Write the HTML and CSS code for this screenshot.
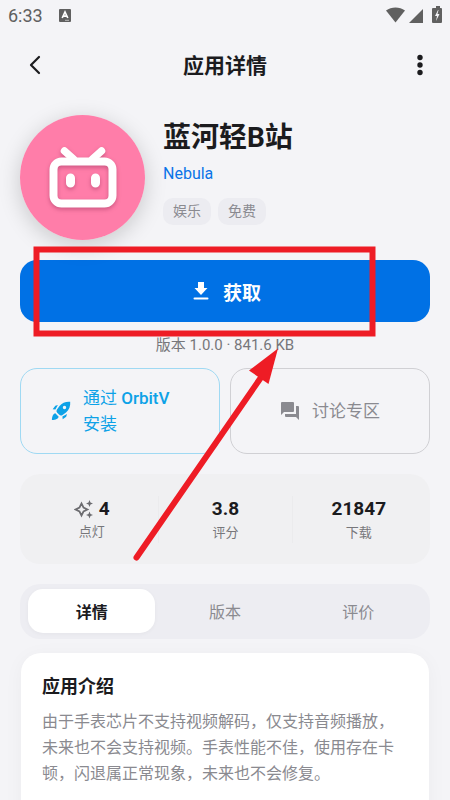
FILE: index.html
```html
<!DOCTYPE html>
<html lang="zh-CN">
<head>
<meta charset="utf-8">
<meta name="viewport" content="width=device-width, initial-scale=1">
<title>应用详情</title>
<link rel="stylesheet" href="styles.css">
</head>
<body>
<div class="screen">
  <div class="status">
    <span class="status-time">6:33</span>
    <svg class="status-app" width="12" height="14" viewBox="0 0 12 14"><rect y="1" width="12" height="13" rx="1" fill="#606060"/><path d="M3.2 10 6 4 8.800 10M4.200 8.200h3.600" fill="none" stroke="#fff" stroke-width="1.700"/><path d="M6 12.300h4" stroke="#bbb" stroke-width="1"/></svg>
    <svg class="status-icons" width="58" height="18" viewBox="0 0 58 18" fill="#606060"><path d="M2 4.500C7.500.5 15.500.5 21 4.500L11.500 16.500z"/><path d="M39 3v14H25z"/><path d="M50 2h2V0h4v2h1q1 0 1 1v13q0 1-1 1h-8q-1 0-1-1V3q0-1 1-1z"/><path d="m54 4-3 6h2l-1 5 3.500-7h-2l1-4z" fill="#f4f4f7"/></svg>
  </div>
  <header class="topbar">
    <button class="icon-button" type="button" aria-label="返回"><svg width="30" height="30" viewBox="0 0 30 30"><path d="m24 7-8 8 8 8" fill="none" stroke="#1b1b1e" stroke-width="2.200" stroke-linecap="round" stroke-linejoin="round"/></svg></button>
    <h1 class="page-title">应用详情</h1>
    <button class="icon-button" type="button" aria-label="更多"><svg width="30" height="30" viewBox="0 0 30 30" fill="#1b1b1e"><circle cx="15" cy="7.500" r="2.700"/><circle cx="15" cy="15" r="2.700"/><circle cx="15" cy="22.500" r="2.700"/></svg></button>
  </header>
  <main class="content">
    <section class="app">
      <div class="app-logo">
        <svg width="125" height="125" viewBox="0 0 125 125">
          <circle cx="62.500" cy="62.500" r="62.500" fill="#ff7da9"/>
          <g class="app-face" fill="none" stroke="#fff" stroke-linecap="round"><rect x="33.500" y="46.500" width="59" height="42" rx="8" stroke-width="8"/><path d="m44.500 36 9 8M81.500 36l-9 8" stroke-width="7.500"/><path d="M50.500 63v5M75.500 63v5" stroke-width="9"/></g>
        </svg>
      </div>
      <div class="app-info">
        <h2 class="app-name">蓝河轻B站</h2>
        <a class="app-author" href="#author">Nebula</a>
        <div class="chips"><span class="chip">娱乐</span><span class="chip">免费</span></div>
      </div>
    </section>
    <button class="get" type="button">
      <svg width="16" height="20" viewBox="0 0 16 20" fill="#fff"><path d="M5 1h6v6h3.500L8 14 1.500 7H5z"/><path d="M1.500 17.500h13" stroke="#fff" stroke-width="2" stroke-linecap="round"/></svg>
      <span>获取</span>
    </button>
    <p class="version">版本 1.0.0 · 841.6 KB</p>
    <div class="actions">
      <button class="action action-orbit" type="button">
        <svg width="20" height="20" viewBox="0 0 20 20" fill="#0da2e7"><path fill-rule="evenodd" d="M19.200.8C15 .4 11 1.800 8.500 5L5.800 8.800q-.9 1.600.4 2.900l2.100 2.100q1.300 1.300 2.900.4L15 11.500C18.200 9 19.600 5 19.200.8zM13.500 4.800a1.700 1.700 0 1 1 0 3.400 1.700 1.700 0 0 1 0-3.400z"/><path d="M6.900 4 4.300 4.800 1.700 8.300l2.700.3zM16 13.100l-.8 2.600-3.500 2.600-.3-2.700zM4.300 12.300l3.400 3.400c-.7 2-2.500 3.200-6.800 3.400.2-4.300 1.400-6.100 3.400-6.800z"/></svg>
        <span>通过 <span class="action-brand">OrbitV</span> 安装</span>
      </button>
      <button class="action action-forum" type="button">
        <svg width="20" height="20" viewBox="0 0 20 20" fill="#8a8a90"><path d="M2 1h11q1 0 1 1v8q0 1-1 1H4L1 14V2q0-1 1-1z"/><path d="M16 5h2q1 0 1 1v13l-3-3H6q-1 0-1-1v-2h11z"/></svg>
        <span>讨论专区</span>
      </button>
    </div>
    <section class="stats">
      <div class="stat stat-lamp"><strong class="stat-value"><svg width="20" height="20" viewBox="0 0 20 20"><path d="m7.500 4.500 2 4 4 2-4 2-2 4-2-4-4-2 4-2z" fill="none" stroke="#6c6c70" stroke-width="1.700"/><path d="m15.500 1 1 2.500 2.500 1-2.500 1-1 2.500-1-2.500-2.500-1 2.500-1zM15.500 12.500l1 2.500 2.500 1-2.500 1-1 2.500-1-2.500-2.500-1 2.500-1z" fill="#6c6c70"/></svg>4</strong><span class="stat-label">点灯</span></div>
      <div class="stat"><strong class="stat-value">3.8</strong><span class="stat-label">评分</span></div>
      <div class="stat"><strong class="stat-value">21847</strong><span class="stat-label">下载</span></div>
    </section>
    <nav class="tabs">
      <button class="tab tab-active" type="button">详情</button>
      <button class="tab" type="button">版本</button>
      <button class="tab" type="button">评价</button>
    </nav>
    <article class="card">
      <h3 class="card-title">应用介绍</h3>
      <p class="card-text">由于手表芯片不支持视频解码，仅支持音频播放，未来也不会支持视频。手表性能不佳，使用存在卡顿，闪退属正常现象，未来也不会修复。</p>
    </article>
  </main>
  <svg class="annotation" width="450" height="800" viewBox="0 0 450 800" aria-hidden="true"><rect x="36.500" y="249.500" width="336" height="84" fill="none" stroke="#ee1c25" stroke-width="6"/><path d="M136.500 557.500 262 376" stroke="#ee1c25" stroke-width="6" stroke-linecap="round"/><path d="M278 348.500 249 370.500 268.500 384z" fill="#ee1c25"/></svg>
</div>
</body>
</html>
```
FILE: styles.css
```css
* {
  box-sizing: border-box;
}

body {
  margin: 0;
  background: #f4f4f7;
  color: #1b1b1e;
  font-family: Roboto, "Noto Sans CJK SC", sans-serif;
}

button {
  margin: 0;
  padding: 0;
  border: 0;
  background: none;
  color: inherit;
  font: inherit;
}

h1, h2, h3, p {
  margin: 0;
}

svg {
  flex: none;
}

.screen {
  position: relative;
  height: 100vh;
  overflow: hidden;
}

.status {
  display: flex;
  align-items: center;
  height: 30px;
  padding: 0 8px;
  color: #606060;
}

.status-time {
  font-size: 18px;
}

.status-app {
  margin-left: 16px;
}

.status-icons {
  margin-left: auto;
}

.topbar {
  display: flex;
  align-items: center;
  justify-content: space-between;
  height: 70px;
  padding: 0 15px;
}

.icon-button {
  width: 30px;
  height: 30px;
}

.page-title {
  padding-top: 2px;
  font-size: 21px;
  line-height: 30px;
  font-weight: 700;
}

.content {
  padding: 15px 20px 0;
}

.app {
  display: flex;
  gap: 18px;
}

.app-logo {
  height: 125px;
  border-radius: 50%;
  box-shadow: 0 5px 22px rgba(0, 0, 0, 0.18);
}

.app-logo svg {
  display: block;
}

.app-face {
  filter: drop-shadow(0 2px 2px rgba(90, 0, 40, 0.3));
}

.app-info {
  display: flex;
  flex-direction: column;
  align-items: flex-start;
}

.app-name {
  font-size: 28px;
  line-height: 46px;
  font-weight: 700;
}

.app-author {
  margin-top: 1px;
  color: #0a74e8;
  font-size: 16px;
  line-height: 24px;
  text-decoration: none;
}

.chips {
  display: flex;
  gap: 7px;
  margin-top: 12px;
}

.chip {
  padding: 0 10px;
  border-radius: 10px;
  background: #ececf1;
  color: #8a8a90;
  font-size: 14px;
  line-height: 27px;
}

.get {
  display: flex;
  align-items: center;
  justify-content: center;
  gap: 14px;
  width: 100%;
  height: 62px;
  margin-top: 20px;
  padding-left: 4px;
  border-radius: 17px;
  background: #0071e5;
  color: #fff;
  font-size: 19px;
  font-weight: 700;
}

.version {
  margin-top: 12px;
  color: #77777b;
  font-size: 15px;
  line-height: 22px;
  text-align: center;
}

.actions {
  display: grid;
  grid-template-columns: 1fr 1fr;
  gap: 10px;
  margin-top: 12px;
}

.action {
  display: flex;
  align-items: center;
  height: 86px;
  border: 1px solid #d0d0d4;
  border-radius: 17px;
  color: #8a8a90;
  font-size: 17px;
  line-height: 26px;
}

.action-orbit {
  gap: 12px;
  padding: 0 30px;
  border-color: #9fd9f3;
  color: #0da2e7;
  text-align: left;
}

.action-brand {
  font-weight: 500;
}

.action-forum {
  justify-content: center;
  gap: 12px;
}

.stats {
  display: grid;
  grid-template-columns: repeat(3, 1fr);
  align-items: center;
  height: 90px;
  margin-top: 20px;
  padding: 0 5px;
  border-radius: 20px;
  background: #f0f0f2;
}

.stat {
  display: flex;
  flex-direction: column;
  align-items: center;
  gap: 1px;
}

.stat-lamp {
  gap: 0;
}

.stat + .stat {
  border-left: 1px solid #ebebed;
}

.stat-value {
  display: flex;
  align-items: center;
  gap: 5px;
  font-size: 19px;
  line-height: 26px;
}

.stat-label {
  color: #77777b;
  font-size: 13px;
  line-height: 20px;
}

.tabs {
  display: grid;
  grid-template-columns: repeat(3, 1fr);
  gap: 6px;
  height: 55px;
  margin-top: 20px;
  padding: 5px 8px 6px;
  border-radius: 20px;
  background: #ededf2;
}

.tab {
  border-radius: 15px;
  color: #8a8a90;
  font-size: 16px;
}

.tab-active {
  background: #fff;
  box-shadow: 0 1px 4px rgba(0, 0, 0, 0.04);
  color: #1b1b1e;
  font-weight: 700;
}

.card {
  min-height: 200px;
  margin: 14px 1px 0;
  padding: 21px;
  border-radius: 20px;
  background: #fff;
  box-shadow: 0 3px 20px rgba(0, 0, 0, 0.04);
}

.card-title {
  font-size: 18px;
  line-height: 26px;
  font-weight: 700;
}

.card-text {
  margin-top: 9px;
  color: #8a8a90;
  font-size: 16px;
  line-height: 26px;
}

.annotation {
  position: absolute;
  top: 0;
  left: 0;
  pointer-events: none;
}
```
